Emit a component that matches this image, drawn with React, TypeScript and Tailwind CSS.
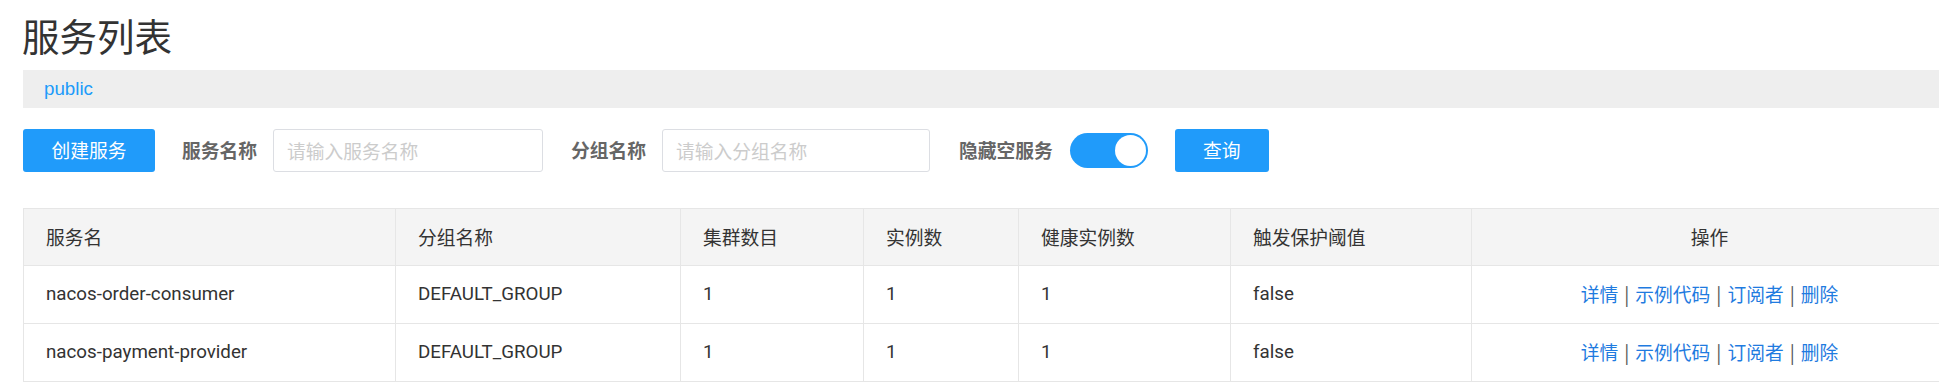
import React from 'react';

const cjk = "font-['Noto_Sans_CJK_SC',sans-serif]";

const columns = [
  { title: '服务名', width: 372 },
  { title: '分组名称', width: 285 },
  { title: '集群数目', width: 183 },
  { title: '实例数', width: 155 },
  { title: '健康实例数', width: 212 },
  { title: '触发保护阈值', width: 241 },
  { title: '操作', width: 476 },
];

const services = [
  { name: 'nacos-order-consumer', group: 'DEFAULT_GROUP', clusters: 1, instances: 1, healthy: 1, threshold: 'false' },
  { name: 'nacos-payment-provider', group: 'DEFAULT_GROUP', clusters: 1, instances: 1, healthy: 1, threshold: 'false' },
];

const actions = ['详情', '示例代码', '订阅者', '删除'];

export default function App() {
  return (
    <div className={`w-full h-[383px] overflow-hidden bg-white ${cjk}`}>
      {/* Title */}
      <div className="h-[70px] pl-[22px] flex items-center">
        <h1 className="text-[37.5px] leading-none text-[#333] font-normal">服务列表</h1>
      </div>

      {/* Namespace bar */}
      <div className="ml-[23px] h-[38px] bg-[#eeeeee] pl-[21px] flex items-center">
        <span className="text-[18.75px] text-[#209bfa] font-['Liberation_Sans',sans-serif]">public</span>
      </div>

      {/* Search */}
      <div className="mt-[21px] ml-[23px] h-[43px] flex items-center">
        <button className="w-[132px] h-[43px] rounded-[3px] bg-[#209bfa] text-white text-[18.75px]">创建服务</button>
        <label className="ml-[27px] text-[18.75px] font-bold text-[#666]">服务名称</label>
        <input
          className="ml-[16px] w-[270px] h-[43px] rounded-[3px] border border-[#dcdee3] px-[13px] text-[18.75px] outline-none placeholder:text-[#cccccc]"
          placeholder="请输入服务名称"
        />
        <label className="ml-[28px] text-[18.75px] font-bold text-[#666]">分组名称</label>
        <input
          className="ml-[16px] w-[268px] h-[43px] rounded-[3px] border border-[#dcdee3] px-[13px] text-[18.75px] outline-none placeholder:text-[#cccccc]"
          placeholder="请输入分组名称"
        />
        <label className="ml-[29px] text-[18.75px] font-bold text-[#666]">隐藏空服务</label>
        <div className="ml-[17px] w-[78px] h-[35px] rounded-full bg-[#209bfa] flex items-center justify-end pr-[2px]">
          <div className="w-[31px] h-[31px] rounded-full bg-white" />
        </div>
        <button className="ml-[27px] w-[94px] h-[43px] rounded-[3px] bg-[#209bfa] text-white text-[18.75px]">查询</button>
      </div>

      {/* Table */}
      <div className="mt-[36px] ml-[23px] w-[1924px]">
        <table className="w-full table-fixed border-collapse border border-[#e6e6e6] text-[18.75px] text-[#333]">
          <colgroup>
            {columns.map((c) => (
              <col key={c.title} style={{ width: c.width }} />
            ))}
          </colgroup>
          <thead>
            <tr className="h-[57px] bg-[#f4f4f4]">
              {columns.map((c, i) => (
                <th
                  key={c.title}
                  className={`border border-[#e6e6e6] px-[22px] font-normal ${i === columns.length - 1 ? 'text-center' : 'text-left'}`}
                >
                  {c.title}
                </th>
              ))}
            </tr>
          </thead>
          <tbody className="font-['Roboto','Noto_Sans_CJK_SC',sans-serif]">
            {services.map((s) => (
              <tr key={s.name} className="h-[58px]">
                <td className="border border-[#e6e6e6] px-[22px]">{s.name}</td>
                <td className="border border-[#e6e6e6] px-[22px]">{s.group}</td>
                <td className="border border-[#e6e6e6] px-[22px]">{s.clusters}</td>
                <td className="border border-[#e6e6e6] px-[22px]">{s.instances}</td>
                <td className="border border-[#e6e6e6] px-[22px]">{s.healthy}</td>
                <td className="border border-[#e6e6e6] px-[22px]">{s.threshold}</td>
                <td className={`border border-[#e6e6e6] px-[22px] text-center ${cjk}`}>
                  {actions.map((a, i) => (
                    <span key={a}>
                      {i > 0 && <span className="text-[#555] mx-[6px]">|</span>}
                      <a className="text-[#1f7be0] cursor-pointer">{a}</a>
                    </span>
                  ))}
                </td>
              </tr>
            ))}
          </tbody>
        </table>
      </div>
    </div>
  );
}
